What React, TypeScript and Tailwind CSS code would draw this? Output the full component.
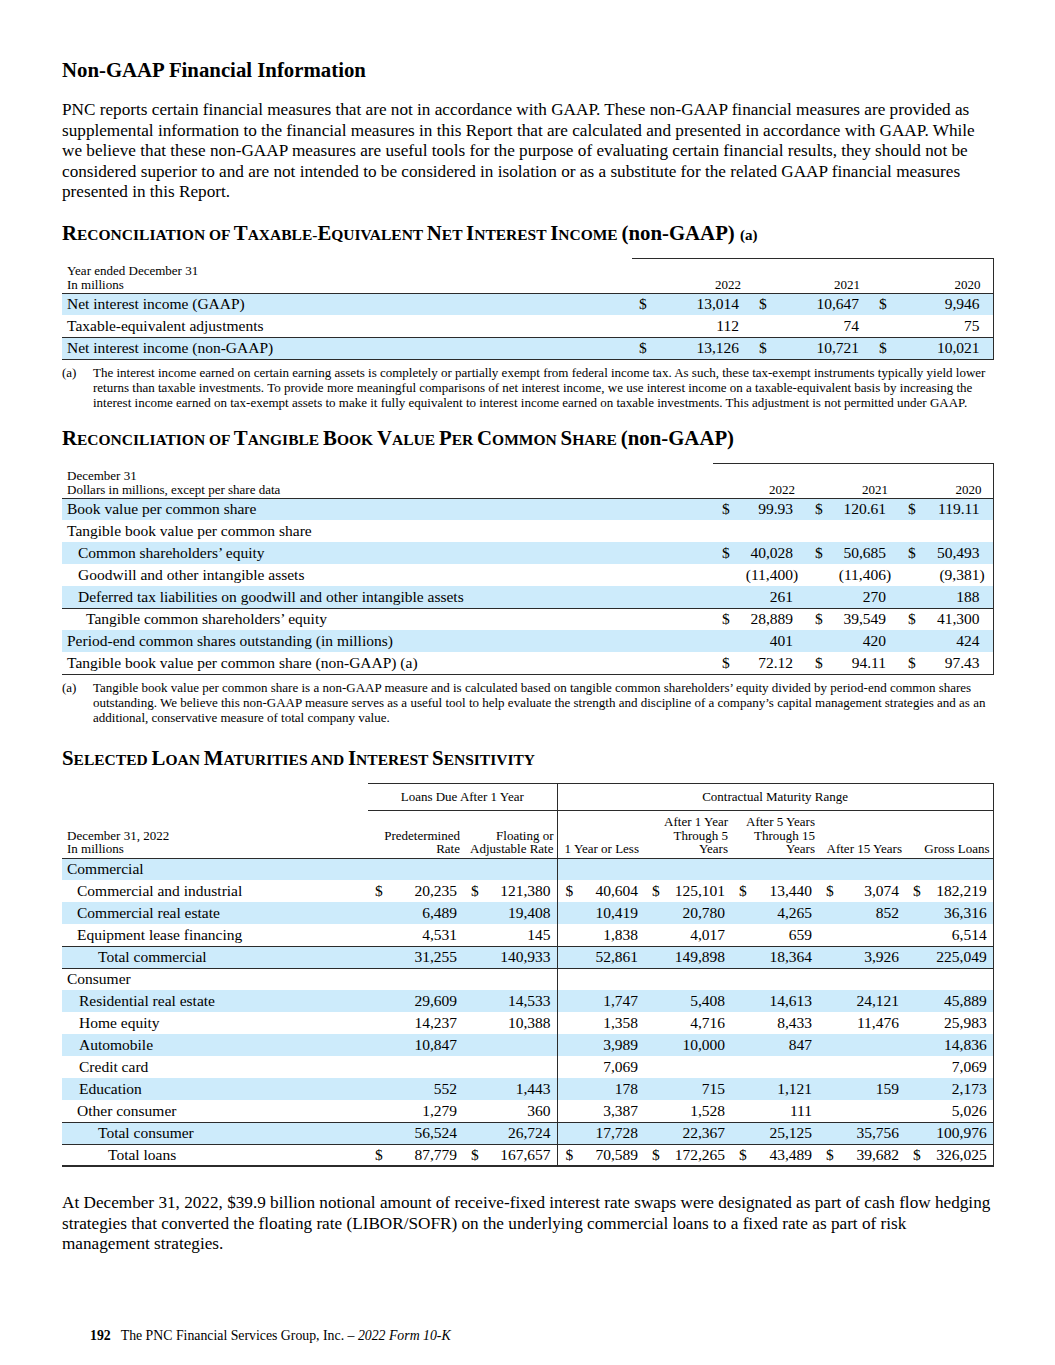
import React from 'react';

const shade = 'bg-[#cdebfb]';
const line = 'border-[#2b2b2b]';

type Row = {
  label: string;
  indent: number;
  vals: string[];
  dollar?: boolean;
  shaded?: boolean;
  bottom?: string;
};

const Num = ({ v }: { v: string }) => {
  if (v.startsWith('(')) {
    return (
      <>
        {v.slice(0, -1)}
        <span className="inline-block w-0">)</span>
      </>
    );
  }
  return <>{v}</>;
};

// capitals stay big, lower case runs are set as smaller capitals
const SmallCaps = ({ text }: { text: string }) => {
  const parts = text.match(/[A-Z]+|[^A-Z]+/g) || [];
  return (
    <>
      {parts.map((p, i) =>
        /^[A-Z]/.test(p) ? (
          <span key={i}>{p}</span>
        ) : (
          <span key={i} className="text-[15.5px] uppercase">
            {p}
          </span>
        )
      )}
    </>
  );
};

const Footnote = ({ lines }: { lines: string[] }) => (
  <div className="flex text-[13px] leading-[15px]">
    <span className="w-[31px] shrink-0">(a)</span>
    <div className="whitespace-nowrap">
      {lines.map((l) => (
        <div key={l}>{l}</div>
      ))}
    </div>
  </div>
);

const Heading = ({ children, className = '' }: { children: React.ReactNode; className?: string }) => (
  <h2 className={`text-[20.8px] leading-[24px] font-bold whitespace-nowrap ${className}`}>{children}</h2>
);

const nii: Row[] = [
  { label: 'Net interest income (GAAP)', indent: 5, vals: ['13,014', '10,647', '9,946'], dollar: true, shaded: true },
  { label: 'Taxable-equivalent adjustments', indent: 5, vals: ['112', '74', '75'] },
  { label: 'Net interest income (non-GAAP)', indent: 5, vals: ['13,126', '10,721', '10,021'], dollar: true, shaded: true },
];

const tbv: Row[] = [
  { label: 'Book value per common share', indent: 5, vals: ['99.93', '120.61', '119.11'], dollar: true, shaded: true },
  { label: 'Tangible book value per common share', indent: 5, vals: ['', '', ''] },
  { label: 'Common shareholders’ equity', indent: 16, vals: ['40,028', '50,685', '50,493'], dollar: true, shaded: true },
  { label: 'Goodwill and other intangible assets', indent: 16, vals: ['(11,400)', '(11,406)', '(9,381)'] },
  { label: 'Deferred tax liabilities on goodwill and other intangible assets', indent: 16, vals: ['261', '270', '188'], shaded: true, bottom: 'border-b' },
  { label: 'Tangible common shareholders’ equity', indent: 24, vals: ['28,889', '39,549', '41,300'], dollar: true },
  { label: 'Period-end common shares outstanding (in millions)', indent: 5, vals: ['401', '420', '424'], shaded: true },
  { label: 'Tangible book value per common share (non-GAAP) (a)', indent: 5, vals: ['72.12', '94.11', '97.43'], dollar: true, bottom: 'border-b' },
];

const loans: Row[] = [
  { label: 'Commercial', indent: 5, vals: ['', '', '', '', '', '', ''], shaded: true },
  { label: 'Commercial and industrial', indent: 15, vals: ['20,235', '121,380', '40,604', '125,101', '13,440', '3,074', '182,219'], dollar: true },
  { label: 'Commercial real estate', indent: 15, vals: ['6,489', '19,408', '10,419', '20,780', '4,265', '852', '36,316'], shaded: true },
  { label: 'Equipment lease financing', indent: 15, vals: ['4,531', '145', '1,838', '4,017', '659', '', '6,514'], bottom: 'border-b' },
  { label: 'Total commercial', indent: 36, vals: ['31,255', '140,933', '52,861', '149,898', '18,364', '3,926', '225,049'], shaded: true, bottom: 'border-b' },
  { label: 'Consumer', indent: 5, vals: ['', '', '', '', '', '', ''] },
  { label: 'Residential real estate', indent: 17, vals: ['29,609', '14,533', '1,747', '5,408', '14,613', '24,121', '45,889'], shaded: true },
  { label: 'Home equity', indent: 17, vals: ['14,237', '10,388', '1,358', '4,716', '8,433', '11,476', '25,983'] },
  { label: 'Automobile', indent: 17, vals: ['10,847', '', '3,989', '10,000', '847', '', '14,836'], shaded: true },
  { label: 'Credit card', indent: 17, vals: ['', '', '7,069', '', '', '', '7,069'] },
  { label: 'Education', indent: 17, vals: ['552', '1,443', '178', '715', '1,121', '159', '2,173'], shaded: true },
  { label: 'Other consumer', indent: 15, vals: ['1,279', '360', '3,387', '1,528', '111', '', '5,026'], bottom: 'border-b' },
  { label: 'Total consumer', indent: 36, vals: ['56,524', '26,724', '17,728', '22,367', '25,125', '35,756', '100,976'], shaded: true, bottom: 'border-b' },
  { label: 'Total loans', indent: 46, vals: ['87,779', '167,657', '70,589', '172,265', '43,489', '39,682', '326,025'], dollar: true, bottom: 'border-b-2' },
];

const NiiTable = () => (
  <table className="w-[931px] table-fixed border-collapse mt-[11px]">
    <colgroup>
      <col className="w-[570px]" />
      <col className="w-[22px]" />
      <col className="w-[98px]" />
      <col className="w-[22px]" />
      <col className="w-[98px]" />
      <col className="w-[22px]" />
      <col className="w-[99px]" />
    </colgroup>
    <tbody>
      <tr className={`h-[35px] border-b ${line}`}>
        <td className="align-bottom pl-[5px] pb-[1px] text-[13px] leading-[14px]">
          Year ended December 31
          <br />
          In millions
        </td>
        {['2022', '2021', '2020'].map((y, i) => (
          <td
            key={y}
            colSpan={2}
            className={`align-bottom text-right pb-[1px] text-[13px] leading-[14px] border-t ${line} ${i === 0 ? 'pr-[11px]' : 'pr-[12px]'} ${i === 2 ? 'border-r' : ''}`}
          >
            {y}
          </td>
        ))}
      </tr>
      {nii.map((r, ri) => (
        <tr key={r.label} className={`h-[22px] text-[15.5px] leading-[20px] ${r.shaded ? shade : ''} ${ri === 2 ? `border-t border-b ${line}` : ''}`}>
          <td className="whitespace-nowrap" style={{ paddingLeft: r.indent }}>
            {r.label}
          </td>
          {r.vals.map((v, i) => (
            <React.Fragment key={i}>
              <td className="pl-[7px]">{r.dollar ? '$' : ''}</td>
              <td className={`text-right pr-[13px] ${i === 2 ? `border-r ${line}` : ''}`}>
                <Num v={v} />
              </td>
            </React.Fragment>
          ))}
        </tr>
      ))}
    </tbody>
  </table>
);

const TbvTable = () => (
  <table className="w-[931px] table-fixed border-collapse mt-[11px]">
    <colgroup>
      <col className="w-[651px]" />
      <col className="w-[22px]" />
      <col className="w-[71px]" />
      <col className="w-[22px]" />
      <col className="w-[71px]" />
      <col className="w-[22px]" />
      <col className="w-[72px]" />
    </colgroup>
    <tbody>
      <tr className={`h-[35px] border-b ${line}`}>
        <td className="align-bottom pl-[5px] pb-[1px] text-[13px] leading-[14px]">
          December 31
          <br />
          Dollars in millions, except per share data
        </td>
        {['2022', '2021', '2020'].map((y, i) => (
          <td
            key={y}
            colSpan={2}
            className={`align-bottom text-right pb-[1px] pr-[11px] text-[13px] leading-[14px] border-t ${line} ${i === 2 ? 'border-r' : ''}`}
          >
            {y}
          </td>
        ))}
      </tr>
      {tbv.map((r) => (
        <tr key={r.label} className={`h-[22px] text-[15.5px] leading-[20px] ${r.shaded ? shade : ''} ${r.bottom ? `${r.bottom} ${line}` : ''}`}>
          <td className="whitespace-nowrap" style={{ paddingLeft: r.indent }}>
            {r.label}
          </td>
          {r.vals.map((v, i) => (
            <React.Fragment key={i}>
              <td className="pl-[9px]">{r.dollar ? '$' : ''}</td>
              <td className={`text-right pr-[13px] ${i === 2 ? `border-r ${line}` : ''}`}>
                <Num v={v} />
              </td>
            </React.Fragment>
          ))}
        </tr>
      ))}
    </tbody>
  </table>
);

const groupHeads = [
  ['Predetermined', 'Rate'],
  ['Floating or', 'Adjustable Rate'],
  ['1 Year or Less'],
  ['After 1 Year', 'Through 5', 'Years'],
  ['After 5 Years', 'Through 15', 'Years'],
  ['After 15 Years'],
  ['Gross Loans'],
];

const LoanTable = () => (
  <table className="w-[931px] table-fixed border-collapse mt-[11px]">
    <colgroup>
      <col className="w-[306px]" />
      <col className="w-[20px]" />
      <col className="w-[75px]" />
      <col className="w-[20px]" />
      <col className="w-[74px]" />
      <col className="w-[20px]" />
      <col className="w-[67px]" />
      <col className="w-[20px]" />
      <col className="w-[67px]" />
      <col className="w-[20px]" />
      <col className="w-[67px]" />
      <col className="w-[20px]" />
      <col className="w-[67px]" />
      <col className="w-[20px]" />
      <col className="w-[68px]" />
    </colgroup>
    <tbody>
      <tr className="h-[27px] text-[13px] leading-[14px]">
        <td />
        <td colSpan={4} className={`text-center border-t border-b ${line}`}>
          Loans Due After 1 Year
        </td>
        <td colSpan={10} className={`text-center border-t border-b border-l border-r ${line}`}>
          Contractual Maturity Range
        </td>
      </tr>
      <tr className={`h-[48px] text-[13px] leading-[13.5px] border-b ${line}`}>
        <td className="align-bottom pl-[5px] pb-[2px]">
          December 31, 2022
          <br />
          In millions
        </td>
        {groupHeads.map((h, i) => (
          <td
            key={i}
            colSpan={2}
            className={`align-bottom text-right pb-[2px] ${i === 2 ? 'pr-[5px]' : 'pr-[3px]'} ${i === 2 ? `border-l ${line}` : ''} ${i === 6 ? `border-r ${line}` : ''}`}
          >
            {h.map((t, j) => (
              <div key={j} className="whitespace-nowrap">
                {t}
              </div>
            ))}
          </td>
        ))}
      </tr>
      {loans.map((r) => (
        <tr key={r.label} className={`h-[22px] text-[15.5px] leading-[20px] ${r.shaded ? shade : ''} ${r.bottom ? `${r.bottom} ${line}` : ''}`}>
          <td className="whitespace-nowrap" style={{ paddingLeft: r.indent }}>
            {r.label}
          </td>
          {r.vals.map((v, i) => (
            <React.Fragment key={i}>
              <td className={`${i === 0 ? 'pl-[7px]' : 'pl-[8px]'} ${i === 2 ? `border-l ${line}` : ''}`}>{r.dollar ? '$' : ''}</td>
              <td className={`text-right pr-[6px] ${i === 6 ? `border-r ${line}` : ''}`}>{v}</td>
            </React.Fragment>
          ))}
        </tr>
      ))}
    </tbody>
  </table>
);

const App = () => {
  return (
    <div className="w-[1055px] min-h-[1365px] bg-white pl-[62px] pt-[58px] pb-[20px] font-['Liberation_Serif',serif] text-black">
      <div className="w-[931px]">
        <h1 className="text-[20.8px] leading-[24px] font-bold">Non-GAAP Financial Information</h1>

        <p className="mt-[18px] text-[17.2px] leading-[20.5px] whitespace-nowrap">
          PNC reports certain financial measures that are not in accordance with GAAP. These non-GAAP financial measures are provided as
          <br />
          supplemental information to the financial measures in this Report that are calculated and presented in accordance with GAAP. While
          <br />
          we believe that these non-GAAP measures are useful tools for the purpose of evaluating certain financial results, they should not be
          <br />
          considered superior to and are not intended to be considered in isolation or as a substitute for the related GAAP financial measures
          <br />
          presented in this Report.
        </p>

        <Heading className="mt-[18px]">
          <SmallCaps text="Reconciliation of Taxable-Equivalent Net Interest Income " />
          (non-GAAP) <span className="text-[15px]">(a)</span>
        </Heading>
        <NiiTable />
        <div className="mt-[5px]">
          <Footnote
            lines={[
              'The interest income earned on certain earning assets is completely or partially exempt from federal income tax. As such, these tax-exempt instruments typically yield lower',
              'returns than taxable investments. To provide more meaningful comparisons of net interest income, we use interest income on a taxable-equivalent basis by increasing the',
              'interest income earned on tax-exempt assets to make it fully equivalent to interest income earned on taxable investments. This adjustment is not permitted under GAAP.',
            ]}
          />
        </div>

        <Heading className="mt-[16px]">
          <SmallCaps text="Reconciliation of Tangible Book Value Per Common Share " />
          (non-GAAP)
        </Heading>
        <TbvTable />
        <div className="mt-[5px]">
          <Footnote
            lines={[
              'Tangible book value per common share is a non-GAAP measure and is calculated based on tangible common shareholders’ equity divided by period-end common shares',
              'outstanding. We believe this non-GAAP measure serves as a useful tool to help evaluate the strength and discipline of a company’s capital management strategies and as an',
              'additional, conservative measure of total company value.',
            ]}
          />
        </div>

        <Heading className="mt-[21px]">
          <SmallCaps text="Selected Loan Maturities and Interest Sensitivity" />
        </Heading>
        <LoanTable />

        <p className="mt-[26px] text-[17.2px] leading-[20.5px] whitespace-nowrap">
          At December 31, 2022, $39.9 billion notional amount of receive-fixed interest rate swaps were designated as part of cash flow hedging
          <br />
          strategies that converted the floating rate (LIBOR/SOFR) on the underlying commercial loans to a fixed rate as part of risk
          <br />
          management strategies.
        </p>

        <div className="mt-[73px] pl-[28px] text-[13.8px] leading-[16px]">
          <span className="font-bold">192</span>
          <span className="ml-[10px]">
            The PNC Financial Services Group, Inc. – <i>2022 Form 10-K</i>
          </span>
        </div>
      </div>
    </div>
  );
};

export default App;
